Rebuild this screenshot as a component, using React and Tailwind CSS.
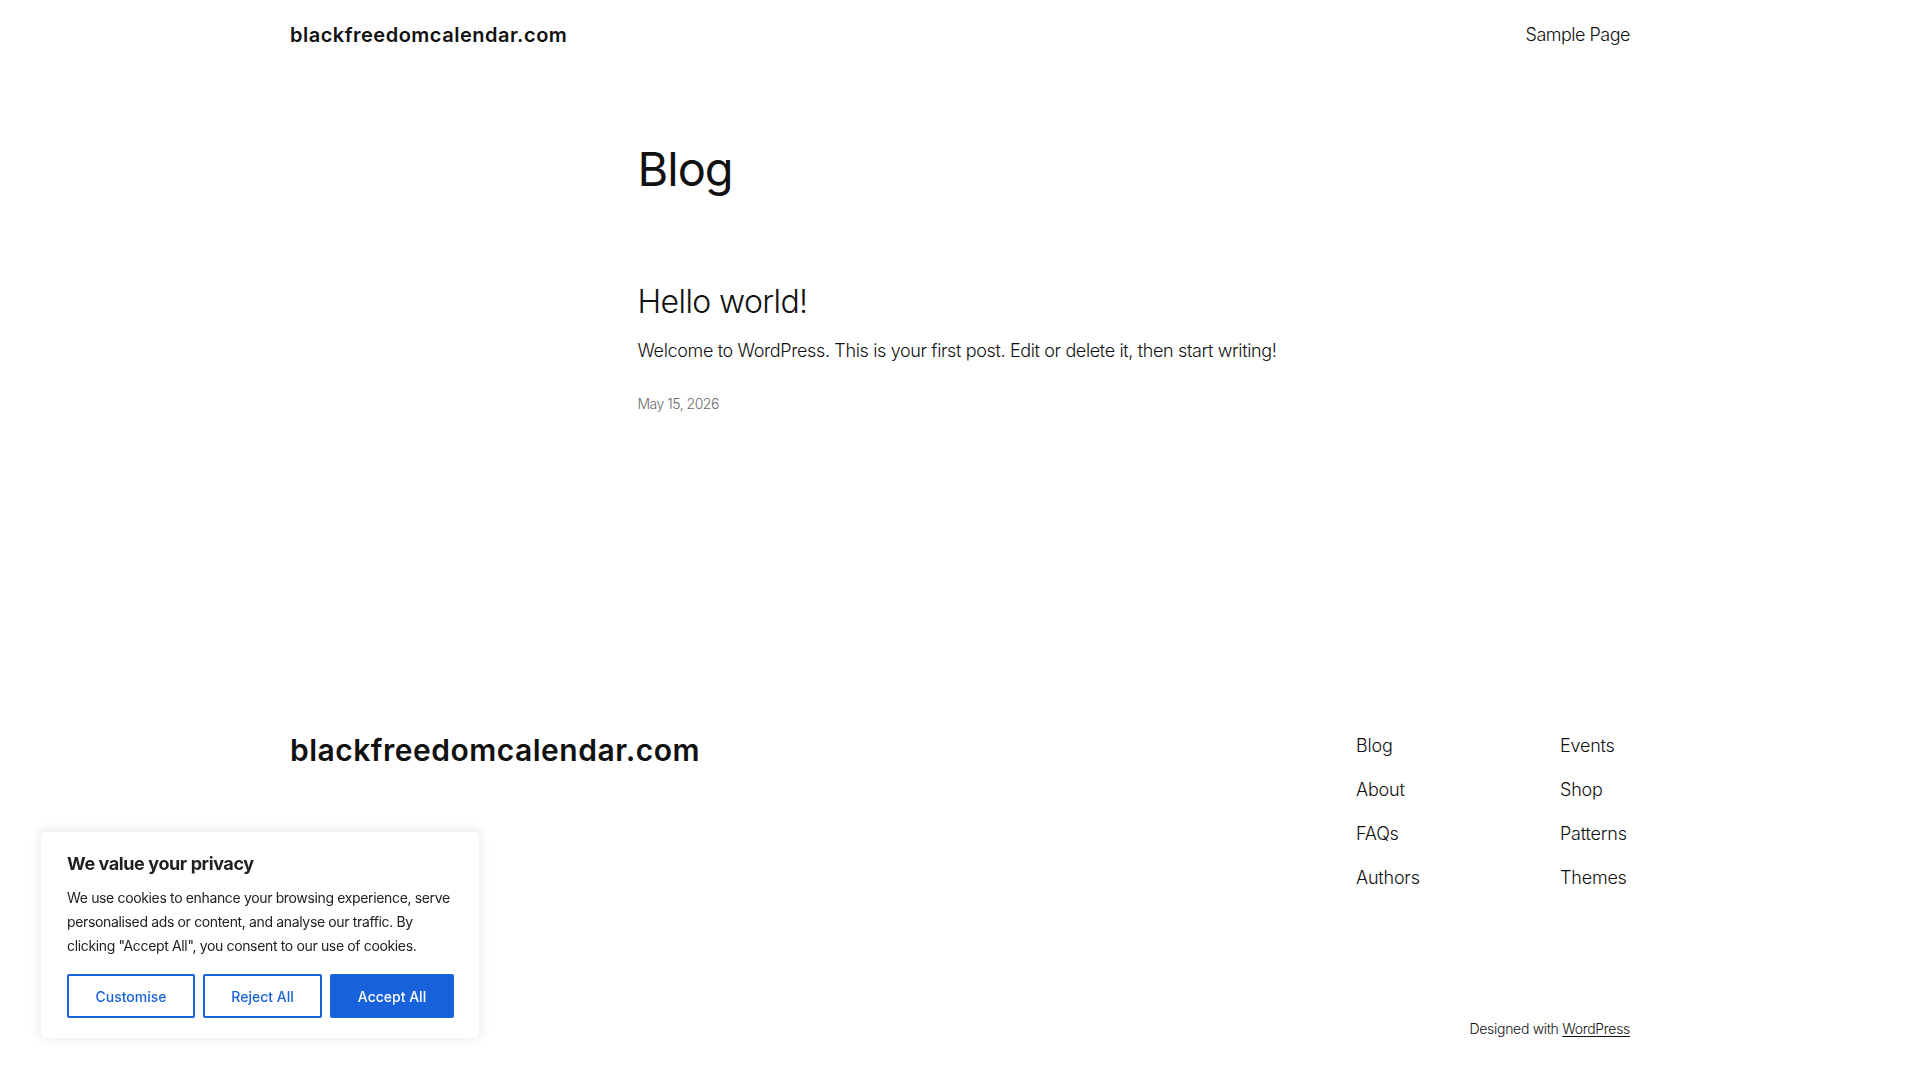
export default function App() {
  const navLeft = ["Blog", "About", "FAQs", "Authors"];
  const navRight = ["Events", "Shop", "Patterns", "Themes"];

  return (
    <div className="relative min-h-screen bg-white text-[#111111] font-['Inter','Noto_Sans',sans-serif]">
      <header className="mx-auto flex h-[68px] max-w-[1340px] items-center justify-between">
        <a href="#" className="mt-[1px] text-[20px] font-semibold leading-7 tracking-[0.5px]">
          blackfreedomcalendar.com
        </a>
        <a href="#" className="mt-[1px] text-[18px] font-light leading-7 tracking-[-0.5px]">
          Sample Page
        </a>
      </header>

      <main className="mx-auto max-w-[645px]">
        <h1 className="mt-[73px] text-[47px] font-normal leading-[56px] tracking-[-1px]">Blog</h1>

        <article className="mt-[86px]">
          <h2 className="text-[32px] font-light leading-[38px] tracking-[-0.6px]">
            <a href="#">Hello world!</a>
          </h2>
          <p className="mt-[15px] text-[18px] font-light leading-[29px] tracking-[-0.36px]">
            Welcome to WordPress. This is your first post. Edit or delete it, then start writing!
          </p>
          <p className="mt-[28px] text-[14px] font-light leading-[22px] tracking-[-0.5px] text-[#6b6b6b]">
            May 15, 2026
          </p>
        </article>
      </main>

      <footer className="mx-auto mt-[316px] max-w-[1340px] pb-[40px]">
        <div className="flex justify-between">
          <a href="#" className="mt-[1px] text-[30px] font-semibold leading-9 tracking-[0.5px]">
            blackfreedomcalendar.com
          </a>
          <div className="flex">
            <ul className="flex w-[204px] flex-col gap-[15px]">
              {navLeft.map((item) => (
                <li key={item} className="text-[18px] font-light leading-[29px] tracking-[-0.2px]">
                  <a href="#">{item}</a>
                </li>
              ))}
            </ul>
            <ul className="flex w-[70px] flex-col gap-[15px]">
              {navRight.map((item) => (
                <li key={item} className="whitespace-nowrap text-[18px] font-light leading-[29px] tracking-[-0.2px]">
                  <a href="#">{item}</a>
                </li>
              ))}
            </ul>
          </div>
        </div>
        <p className="mt-[126px] text-right text-[14px] font-light leading-[22px] tracking-[-0.3px]">
          Designed with{" "}
          <a href="#" className="underline underline-offset-2">
            WordPress
          </a>
        </p>
      </footer>

      <div className="fixed bottom-[41px] left-[40px] w-[440px] rounded-md border border-[#f4f4f4] bg-white py-5 pl-[26px] pr-5 text-[#212121] shadow-[0_-1px_10px_0_rgba(172,171,171,0.3)]">
        <p className="mb-[10px] text-[18px] font-bold leading-6 tracking-[-0.4px]">We value your privacy</p>
        <p className="whitespace-nowrap text-[14px] leading-6 tracking-[-0.35px]">
          We use cookies to enhance your browsing experience, serve
          <br />
          personalised ads or content, and analyse our traffic. By
          <br />
          clicking "Accept All", you consent to our use of cookies.
        </p>
        <div className="mt-4 flex gap-2">
          <button className="h-[44px] w-[128px] rounded-[2px] border-2 border-[#1863dc] text-[14px] font-medium text-[#1863dc]">
            Customise
          </button>
          <button className="h-[44px] w-[119px] rounded-[2px] border-2 border-[#1863dc] text-[14px] font-medium text-[#1863dc]">
            Reject All
          </button>
          <button className="h-[44px] w-[124px] rounded-[2px] border-2 border-[#1863dc] bg-[#1863dc] text-[14px] font-medium text-white">
            Accept All
          </button>
        </div>
      </div>
    </div>
  );
}
